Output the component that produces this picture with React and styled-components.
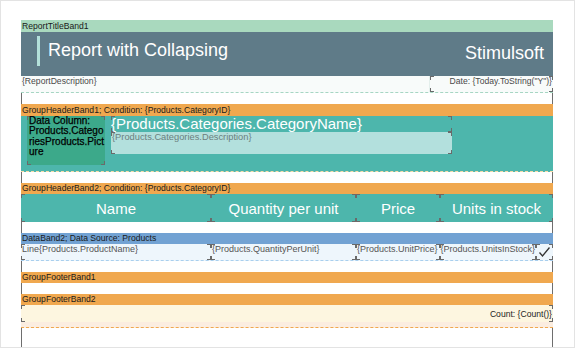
import styled, { createGlobalStyle, css } from 'styled-components'

const GlobalStyle = createGlobalStyle`
  html, body {
    margin: 0;
    padding: 0;
    background: #fff;
  }
  body {
    font-family: "Liberation Sans", Arial, sans-serif;
  }
`

const markColor = '#6a6a6a'
const corners = css`
  background-image: ${Array(8).fill(`linear-gradient(${markColor}, ${markColor})`).join(', ')};
  background-size: 4px 1px, 1px 4px, 4px 1px, 1px 4px, 4px 1px, 1px 4px, 4px 1px, 1px 4px;
  background-position: left top, left top, right top, right top, left bottom, left bottom, right bottom, right bottom;
  background-repeat: no-repeat;
`

const columns = [
  { title: 'Name', field: 'Line{Products.ProductName}', w: 190 },
  { title: 'Quantity per unit', field: '{Products.QuantityPerUnit}', w: 145 },
  { title: 'Price', field: '{Products.UnitPrice}', w: 84 },
  { title: 'Units in stock', field: '{Products.UnitsInStock}', w: 113 },
]

export default function App() {
  return (
    <>
      <GlobalStyle />
      <Frame>
        <Page>
          <BandLabel $bg="#a9d9be" $h={12}>ReportTitleBand1</BandLabel>
          <TitlePanel>
            <TitleBox>
              <Accent />
              <TitleText>Report with Collapsing</TitleText>
            </TitleBox>
            <Brand>Stimulsoft</Brand>
          </TitlePanel>
          <DescRow>
            <SmallText>{'{ReportDescription}'}</SmallText>
            <DateBox>{'Date: {Today.ToString("Y")}'}</DateBox>
          </DescRow>
          <Gap />

          <BandLabel $bg="#f0a84f" $h={12}>GroupHeaderBand1; Condition: {'{Products.CategoryID}'}</BandLabel>
          <GroupBody>
            <Picture>
              Data Column:<br />Products.CategoriesProducts.Picture
            </Picture>
            <NameCol>
              <CategoryName>{'{Products.Categories.CategoryName}'}</CategoryName>
              <CategoryDesc>{'{Products.Categories.Description}'}</CategoryDesc>
            </NameCol>
          </GroupBody>
          <Gap />

          <BandLabel $bg="#f0a84f">GroupHeaderBand2; Condition: {'{Products.CategoryID}'}</BandLabel>
          <HeaderRow>
            {columns.map(c => (
              <HeadCell key={c.title} $w={c.w}>{c.title}</HeadCell>
            ))}
          </HeaderRow>
          <Gap />

          <BandLabel $bg="#72a2d3">DataBand2; Data Source: Products</BandLabel>
          <DataRow>
            {columns.map((c, i) => (
              <DataCell key={c.field} $w={i === 3 ? c.w - 17 : c.w} $end={i === 3}>
                {c.field}
              </DataCell>
            ))}
            <CheckCell>
              <svg width="13" height="12" viewBox="0 0 13 12">
                <path d="M1.5 6.5 L4.5 10 L11.5 1.5" fill="none" stroke="#333" strokeWidth="1.3" />
              </svg>
            </CheckCell>
          </DataRow>
          <Gap />

          <BandLabel $bg="#f0a84f">GroupFooterBand1</BandLabel>
          <Gap />
          <BandLabel $bg="#f0a84f">GroupFooterBand2</BandLabel>
          <FooterBand>
            <CountBox>{'Count: {Count()}'}</CountBox>
          </FooterBand>
        </Page>
      </Frame>
    </>
  )
}

const Frame = styled.div`
  box-sizing: border-box;
  width: 575px;
  height: 348px;
  border: 1px solid #e3e3e3;
  padding: 19px 0 0 20px;
  display: flex;
`

const Page = styled.div`
  box-sizing: border-box;
  width: 532px;
  border-left: 1px solid #6e6e6e;
  border-right: 1px solid #6e6e6e;
  display: flex;
  flex-direction: column;
`

const BandLabel = styled.div`
  margin: 0 -1px;
  height: ${p => p.$h || 11}px;
  line-height: ${p => p.$h || 11}px;
  background: ${p => p.$bg};
  padding-left: 1px;
  font-size: 8.6px;
  color: #1a1a1a;
  white-space: nowrap;
`

const Gap = styled.div`
  height: 11px;
  flex-shrink: 0;
`

const TitlePanel = styled.div`
  box-sizing: border-box;
  margin: 0 -1px;
  height: 44px;
  padding: 4px 9px 0 16px;
  background: #5f7b88;
  display: flex;
  justify-content: space-between;
  align-items: flex-start;
`

const TitleBox = styled.div`
  display: flex;
  gap: 8px;
  height: 30px;
`

const Accent = styled.div`
  width: 3px;
  height: 30px;
  background: #b3e0da;
`

const TitleText = styled.div`
  margin-top: 4px;
  font-size: 18px;
  line-height: 20px;
  color: #fff;
`

const Brand = styled.div`
  margin-top: 7px;
  font-size: 18px;
  line-height: 20px;
  color: #fff;
`

const DescRow = styled.div`
  box-sizing: border-box;
  margin: 0 -1px;
  height: 17px;
  background: #f8fbfa;
  border-bottom: 1px dashed #a6d6c3;
  display: flex;
  justify-content: space-between;
`

const SmallText = styled.div`
  padding-left: 1px;
  font-size: 8.6px;
  line-height: 11px;
  color: #4a4a4a;
  white-space: nowrap;
`

const DateBox = styled(SmallText)`
  box-sizing: border-box;
  width: 124px;
  height: 16px;
  padding: 0 1px 0 0;
  text-align: right;
  border-left: 1px solid #e4efec;
  ${corners}
`

const GroupBody = styled.div`
  box-sizing: border-box;
  margin: 0 -1px;
  height: 56px;
  padding-left: 6px;
  background: #4db6ac;
  border-bottom: 1px dashed #f7dcaa;
  display: flex;
  gap: 6px;
`

const Picture = styled.div`
  box-sizing: border-box;
  width: 78px;
  height: 49px;
  padding-left: 2px;
  background-color: #3ca98a;
  font-size: 10px;
  line-height: 10.3px;
  color: #000;
  -webkit-text-stroke: 0.25px #000;
  word-break: break-all;
  ${corners}
`

const NameCol = styled.div`
  width: 341px;
  display: flex;
  flex-direction: column;
`

const CategoryName = styled.div`
  height: 16px;
  font-size: 15px;
  line-height: 16px;
  color: #fff;
  white-space: nowrap;
  ${corners}
`

const CategoryDesc = styled.div`
  height: 22px;
  padding-left: 1px;
  background-color: #b3e0dd;
  font-size: 9.3px;
  line-height: 11px;
  color: #6b7f7d;
  ${corners}
`

const HeaderRow = styled.div`
  margin: 0 -1px;
  height: 28px;
  background: #4db6ac;
  display: flex;
`

const HeadCell = styled.div`
  width: ${p => p.$w}px;
  display: flex;
  align-items: center;
  justify-content: center;
  font-size: 15px;
  color: #fff;
  ${corners}
`

const DataRow = styled.div`
  box-sizing: border-box;
  margin: 0 -1px;
  height: 17px;
  background: #eef6fc;
  border-bottom: 1px dashed #a9cfee;
  display: flex;
`

const DataCell = styled.div`
  box-sizing: border-box;
  width: ${p => p.$w}px;
  height: 16px;
  padding: ${p => (p.$end ? '0 1px 0 0' : '0 0 0 1px')};
  white-space: nowrap;
  display: flex;
  justify-content: ${p => (p.$end ? 'flex-end' : 'flex-start')};
  font-size: 9px;
  line-height: 11px;
  color: #555;
  ${corners}
`

const CheckCell = styled.div`
  box-sizing: border-box;
  width: 17px;
  height: 16px;
  padding-top: 2px;
  display: flex;
  justify-content: center;
  ${corners}
`

const FooterBand = styled.div`
  box-sizing: border-box;
  margin: 0 -1px;
  height: 23px;
  background: #fbede0;
  border-bottom: 1px dashed #f0a84f;
`

const CountBox = styled.div`
  box-sizing: border-box;
  height: 17px;
  padding-right: 1px;
  background-color: #fdf6e0;
  display: flex;
  align-items: center;
  justify-content: flex-end;
  font-size: 8.6px;
  color: #222;
  ${corners}
`
